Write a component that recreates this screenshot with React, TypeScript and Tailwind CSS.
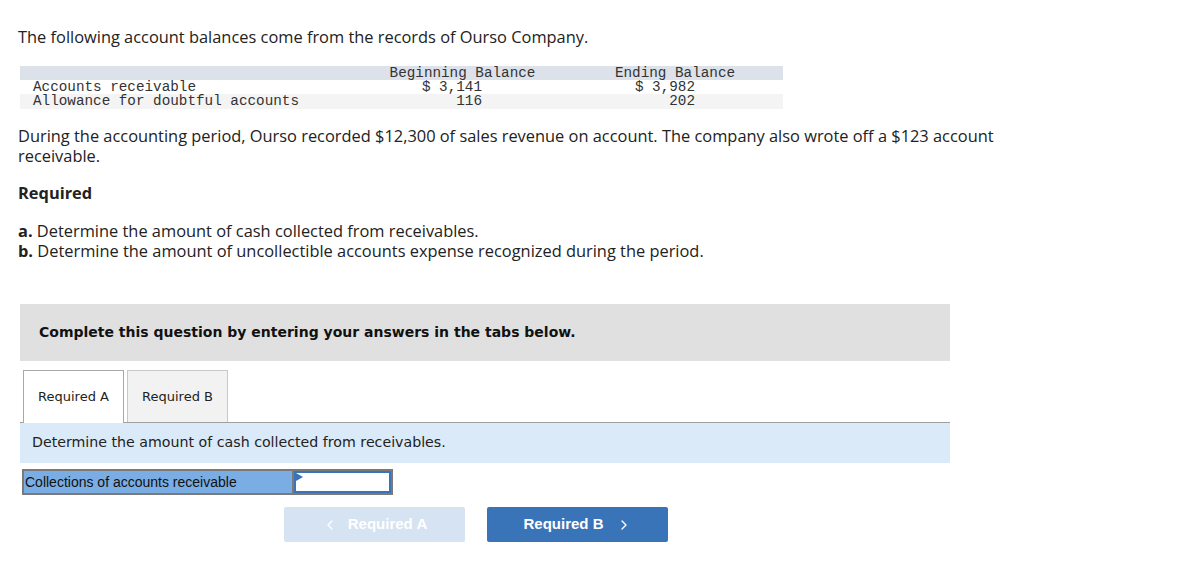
import { ChevronLeft, ChevronRight } from "lucide-react";

const body = "font-['Open_Sans',sans-serif]";
const mono = "font-['Liberation_Mono',monospace]";
const verdana = "font-['DejaVu_Sans',sans-serif]";
const arial = "font-['Liberation_Sans',Arial,sans-serif]";

export default function App() {
  return (
    <div className={`w-[1200px] h-[588px] bg-white text-[#222] ${body}`}>
      <div className="pt-[26px] pl-[18px]">
        <p className="text-[16.4px] leading-[22px]">
          The following account balances come from the records of Ourso Company.
        </p>

        {/* balances table */}
        <div className={`mt-[18px] ml-[2px] w-[763px] text-[14.3px] leading-[14px] text-[#333] ${mono}`}>
          <div className="grid grid-cols-[360px_165px_45px_170px_23px] bg-[#dde1ea] h-[14px]">
            <div />
            <div className="text-center">Beginning Balance</div>
            <div />
            <div className="text-center">Ending Balance</div>
            <div />
          </div>
          <div className="grid grid-cols-[360px_165px_45px_170px_23px] h-[14px]">
            <div className="pl-[13px]">Accounts receivable</div>
            <div className="text-right pr-[63px]">$ 3,141</div>
            <div />
            <div className="text-right pr-[65px]">$ 3,982</div>
            <div />
          </div>
          <div className="grid grid-cols-[360px_165px_45px_170px_23px] bg-[#f4f4f4] h-[15px]">
            <div className="pl-[13px]">Allowance for doubtful accounts</div>
            <div className="text-right pr-[63px]">116</div>
            <div />
            <div className="text-right pr-[65px]">202</div>
            <div />
          </div>
        </div>

        <p className="mt-[17px] w-[990px] text-[16.4px] leading-[20px]">
          During the accounting period, Ourso recorded $12,300 of sales revenue on account. The company also wrote off a $123 account receivable.
        </p>

        <p className="mt-[17px] text-[16.4px] leading-[20px] font-bold">Required</p>

        <div className="mt-[18px] text-[16.4px] leading-[20px]">
          <p>
            <span className="font-bold">a.</span> Determine the amount of cash collected from receivables.
          </p>
          <p>
            <span className="font-bold">b.</span> Determine the amount of uncollectible accounts expense recognized during the period.
          </p>
        </div>
      </div>

      {/* question panel */}
      <div className="ml-[20px] mt-[43px] w-[930px]">
        <div className={`h-[57px] bg-[#e0e0e0] flex items-center pl-[19px] text-[14px] font-bold text-[#111] ${verdana}`}>
          Complete this question by entering your answers in the tabs below.
        </div>

        <div className={`mt-[9px] flex items-end border-b border-[#a0a0a0] text-[13px] text-[#222] ${verdana}`}>
          <div className="ml-[3px] w-[101px] h-[53px] -mb-px bg-white border border-b-0 border-[#a8a8a8] flex items-center justify-center">
            Required A
          </div>
          <div className="ml-[3px] w-[101px] h-[52px] bg-[#f2f2f2] border border-b-0 border-[#c8c8c8] flex items-center justify-center">
            Required B
          </div>
        </div>

        <div className={`h-[40px] bg-[#dbeaf8] flex items-center pl-[12px] text-[14.2px] text-[#222] ${verdana}`}>
          Determine the amount of cash collected from receivables.
        </div>

        <div className={`mt-[6px] ml-[2px] flex w-[371px] h-[26px] border-2 border-[#7a7a7a] text-[14px] text-[#111] ${arial}`}>
          <div className="w-[270px] bg-[#7aade3] flex items-center pl-[1px] border-r-2 border-[#7a7a7a]">
            Collections of accounts receivable
          </div>
          <div className="relative flex-1 bg-white border-2 border-[#3b73b9]">
            <div className="absolute left-0 top-0 w-0 h-0 border-y-[4px] border-y-transparent border-l-[7px] border-l-[#3b73b9]" />
          </div>
        </div>

        <div className={`mt-[12px] flex gap-[22px] ml-[264px] text-[15px] font-bold text-white ${arial}`}>
          <div className="w-[181px] h-[35px] rounded-[2px] bg-[#d6e3f2] flex items-center justify-center gap-[10px]">
            <ChevronLeft size={16} strokeWidth={2} />
            <span>Required A</span>
          </div>
          <div className="w-[181px] h-[35px] rounded-[2px] bg-[#3a74b8] flex items-center justify-center gap-[12px]">
            <span>Required B</span>
            <ChevronRight size={16} strokeWidth={2} />
          </div>
        </div>
      </div>
    </div>
  );
}
